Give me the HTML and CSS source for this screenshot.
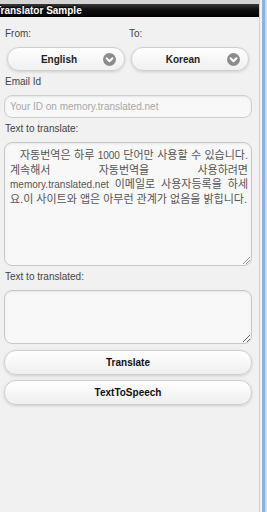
FILE: index.html
```html
<!DOCTYPE html>
<html lang="ko">
<head>
    <meta charset="UTF-8">
    <meta name="viewport" content="width=device-width, initial-scale=1.0">
    <title>Translator Sample</title>
    <link rel="stylesheet" href="styles.css">
</head>
<body>
    <div class="app">
        <div class="header">Translator Sample</div>

        <div class="content">
            <div class="lang-row">
                <div class="lang-col">
                    <label class="field-label first">From:</label>
                    <div class="select-btn">
                        <span>English</span>
                        <svg class="arrow" width="13" height="13" viewBox="0 0 13 13">
                            <circle cx="6.5" cy="6.5" r="6.5" fill="#8c8c8c"/>
                            <path d="M3.6 5.3 L6.5 8.2 L9.4 5.3" fill="none" stroke="#fff" stroke-width="2" stroke-linecap="round" stroke-linejoin="round"/>
                        </svg>
                    </div>
                </div>
                <div class="lang-col">
                    <label class="field-label first">To:</label>
                    <div class="select-btn">
                        <span>Korean</span>
                        <svg class="arrow" width="13" height="13" viewBox="0 0 13 13">
                            <circle cx="6.5" cy="6.5" r="6.5" fill="#8c8c8c"/>
                            <path d="M3.6 5.3 L6.5 8.2 L9.4 5.3" fill="none" stroke="#fff" stroke-width="2" stroke-linecap="round" stroke-linejoin="round"/>
                        </svg>
                    </div>
                </div>
            </div>

            <label class="field-label">Email Id</label>
            <input class="text-input" type="text" placeholder="Your ID on memory.translated.net">

            <label class="field-label">Text to translate:</label>
            <!-- 원문 영역: 줄바꿈을 원본 화면과 맞추기 위해 줄 단위로 나눔 -->
            <div class="text-area big">
                <span class="line first-line">자동번역은 하루 <span class="latin">1000</span> 단어만 사용할 수 있습니다.</span>
                <span class="line">계속해서 자동번역을 사용하려면</span>
                <span class="line"><span class="latin">memory.translated.net</span> 이메일로 사용자등록을 하세</span>
                <span class="line last-line">요.이 사이트와 앱은 아무런 관계가 없음을 밝힙니다.</span>
            </div>

            <label class="field-label">Text to translated:</label>
            <textarea class="text-area small"></textarea>

            <button class="btn">Translate</button>
            <button class="btn">TextToSpeech</button>
        </div>
    </div>
    <div class="edge"></div>
</body>
</html>
```

FILE: styles.css
```css
* {
    margin: 0;
    padding: 0;
    box-sizing: border-box;
}

body {
    font-family: 'Liberation Sans', Arial, 'Noto Sans CJK KR', sans-serif;
    background: #f0f0f0;
    display: flex;
    min-height: 512px;
}

.app {
    width: 259px;
    background: #f1f1f1;
}

.header {
    height: 17px;
    border-top: 4px solid #d4d4d4;
    background: linear-gradient(#3a3a3a, #111 40%, #000);
    color: #fff;
    font-size: 10px;
    font-weight: bold;
    line-height: 13px;
    text-indent: -5px;
    white-space: nowrap;
    overflow: hidden;
    text-shadow: 0 -1px 1px #000;
}

.content {
    padding: 0 7px 0 4px;
    display: flex;
    flex-direction: column;
}

.field-label {
    display: block;
    font-size: 10px;
    line-height: 12px;
    color: #444;
    padding-left: 1px;
    margin: 5px 0 7px;
}

.field-label.first {
    margin-top: 11px;
}

.lang-row {
    display: grid;
    grid-template-columns: 1fr 1fr;
}

.select-btn {
    margin: 0 3px;
    height: 24px;
    padding-right: 14px;
    border: 1px solid #cfcfcf;
    border-radius: 12px;
    background: linear-gradient(#ffffff, #f0f0f0);
    box-shadow: 0 1px 3px rgba(0, 0, 0, 0.15);
    display: flex;
    align-items: center;
    justify-content: center;
    position: relative;
    font-size: 10px;
    font-weight: bold;
    color: #222;
}

.select-btn .arrow {
    position: absolute;
    right: 8px;
    top: 5px;
}

.text-input {
    height: 23px;
    border: 1px solid #cfcfcf;
    border-radius: 8px;
    background: #f8f8f8;
    box-shadow: inset 0 1px 2px rgba(0, 0, 0, 0.08);
    padding: 0 5px;
    font-family: inherit;
    font-size: 10px;
    color: #333;
    outline: none;
}

.text-input::placeholder {
    color: #a8a8a8;
}

.text-area {
    border: 1px solid #c8c8c8;
    border-radius: 8px;
    background: #f8f8f8;
    box-shadow: inset 0 1px 2px rgba(0, 0, 0, 0.08);
    padding: 5px 3px 5px 5px;
    font-family: 'Liberation Sans', Arial, 'Noto Sans CJK KR', sans-serif;
    font-size: 11px;
    line-height: 14px;
    color: #555;
    outline: none;
    overflow: hidden;
    position: relative;
}

.text-area .line {
    display: block;
    white-space: nowrap;
    text-align: justify;
    text-align-last: justify;
}

.text-area .first-line {
    text-indent: 10px;
}

.text-area .last-line {
    text-align-last: left;
}

.text-area .latin {
    font-size: 10px;
}

/* 크기 조절 손잡이 */
.text-area.big::after {
    content: '';
    position: absolute;
    right: 1px;
    bottom: 1px;
    width: 7px;
    height: 7px;
    background: linear-gradient(135deg, transparent 45%, #999 45%, #999 52%, transparent 52%, transparent 70%, #999 70%, #999 77%, transparent 77%);
}

.text-area.big {
    height: 124px;
}

.text-area.small {
    height: 54px;
}

.btn {
    height: 25px;
    margin-top: 6px;
    border: 1px solid #cfcfcf;
    border-radius: 12px;
    background: linear-gradient(#ffffff, #efefef);
    box-shadow: 0 1px 3px rgba(0, 0, 0, 0.15);
    font-family: inherit;
    font-size: 10px;
    font-weight: bold;
    color: #111;
}

.btn + .btn {
    margin-top: 5px;
}

.edge {
    width: 8px;
    border-left: 1px solid #d0d0d0;
    background: linear-gradient(90deg, #f2f2f2 0, #f2f2f2 2px, #8db2e2 2px, #8db2e2 5px, #cddcf1 5px);
}
```
